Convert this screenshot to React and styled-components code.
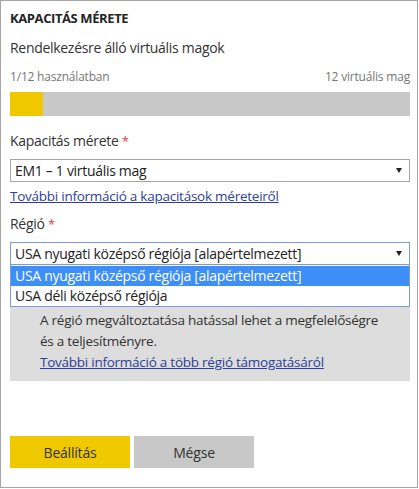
import React from "react";
import styled, { createGlobalStyle } from "styled-components";

const GlobalStyle = createGlobalStyle`
  html, body {
    margin: 0;
    padding: 0;
    background: #ffffff;
  }
  body {
    font-family: "Open Sans", "Noto Sans", sans-serif;
    color: #333333;
  }
`;

function Arrow() {
  return (
    <svg width="6" height="5" viewBox="0 0 6 5">
      <polygon points="0,0 6,0 3,5" fill="#222" />
    </svg>
  );
}

function Select({ value, focused, children }) {
  return (
    <SelectWrap>
      <SelectBox focused={focused}>
        <span>{value}</span>
        <Arrow />
      </SelectBox>
      {children}
    </SelectWrap>
  );
}

function App() {
  const used = 1;
  const total = 12;
  const options = [
    "USA nyugati középső régiója [alapértelmezett]",
    "USA déli középső régiója",
  ];
  return (
    <>
      <GlobalStyle />
      <Panel>
        <Heading>KAPACITÁS MÉRETE</Heading>
        <Subtitle>Rendelkezésre álló virtuális magok</Subtitle>
        <UsageRow>
          <span>
            {used}/{total} használatban
          </span>
          <span>{total} virtuális mag</span>
        </UsageRow>
        <Bar>
          <BarFill style={{ width: `${(used / total) * 100}%` }} />
        </Bar>

        <Label>
          Kapacitás mérete <Required>*</Required>
        </Label>
        <Select value="EM1 – 1 virtuális mag" />
        <Link href="#">További információ a kapacitások méreteiről</Link>

        <Label $tight>
          Régió <Required>*</Required>
        </Label>
        <Select value={options[0]} focused>
          <Dropdown>
            {options.map((o, i) => (
              <Option key={o} selected={i === 0}>
                {o}
              </Option>
            ))}
          </Dropdown>
        </Select>

        <InfoBox>
          <InfoText>A kapacitás a kiválasztott régióban jön létre.</InfoText>
          <InfoText>
            A régió megváltoztatása hatással lehet a megfelelőségre
          </InfoText>
          <InfoText>és a teljesítményre.</InfoText>
          <InfoText>
            <Link href="#" $inline>
              További információ a több régió támogatásáról
            </Link>
          </InfoText>
        </InfoBox>

        <Buttons>
          <Button primary>Beállítás</Button>
          <Button>Mégse</Button>
        </Buttons>
      </Panel>
    </>
  );
}

export default App;

const Panel = styled.div`
  box-sizing: border-box;
  width: 418px;
  height: 488px;
  border: 1px solid #a6a6a6;
  padding: 8px 7px 0 9px;
  display: flex;
  flex-direction: column;
`;

const Heading = styled.div`
  font-size: 13px;
  font-weight: 700;
  line-height: 18px;
  color: #252423;
  letter-spacing: -0.4px;
`;

const Subtitle = styled.div`
  margin-top: 11px;
  font-size: 14px;
  line-height: 20px;
  color: #333;
  letter-spacing: -0.3px;
`;

const UsageRow = styled.div`
  margin-top: 11px;
  display: flex;
  justify-content: space-between;
  font-size: 12px;
  line-height: 16px;
  color: #777;
  letter-spacing: -0.2px;
`;

const Bar = styled.div`
  margin-top: 7px;
  height: 24px;
  background: #c8c8c8;
`;

const BarFill = styled.div`
  height: 100%;
  background: #f0c800;
`;

const Label = styled.div`
  margin-top: ${(p) => (p.$tight ? "8px" : "15px")};
  font-size: 14px;
  line-height: 20px;
  color: #333;
  letter-spacing: -0.3px;
`;

const Required = styled.span`
  color: #e8413a;
  font-size: 13px;
`;

const SelectWrap = styled.div`
  position: relative;
  margin-top: 8px;
`;

const SelectBox = styled.div`
  box-sizing: border-box;
  height: 23px;
  border: 1px solid ${(p) => (p.focused ? "#7b9ad8" : "#a6a6a6")};
  padding: 0 7px 0 4px;
  display: flex;
  align-items: center;
  justify-content: space-between;
  font-size: 14px;
  color: #222;
  letter-spacing: -0.3px;
  background: #fff;
`;

const Dropdown = styled.div`
  position: absolute;
  top: 100%;
  left: 0;
  right: 0;
  box-sizing: border-box;
  border: 1px solid #7b9ad8;
  border-top: none;
  padding-top: 1px;
  background: #fff;
  z-index: 2;
`;

const Option = styled.div`
  height: 20px;
  line-height: 20px;
  padding-left: 4px;
  font-size: 14px;
  letter-spacing: -0.3px;
  color: ${(p) => (p.selected ? "#fff" : "#222")};
  background: ${(p) => (p.selected ? "#3d8ef7" : "#fff")};
`;

const Link = styled.a`
  display: ${(p) => (p.$inline ? "inline" : "block")};
  margin-top: ${(p) => (p.$inline ? "0" : "4px")};
  font-size: 13.5px;
  line-height: 20px;
  color: #2e3f9b;
  text-decoration: underline;
  letter-spacing: -0.25px;
`;

const InfoBox = styled.div`
  margin-top: 16px;
  background: #dddddd;
  padding: 8px 10px 8px 30px;
`;

const InfoText = styled.div`
  font-size: 13.5px;
  line-height: 21px;
  color: #333;
  letter-spacing: -0.25px;
  white-space: nowrap;
`;

const Buttons = styled.div`
  margin-top: 55px;
  display: flex;
  gap: 4px;
`;

const Button = styled.button`
  width: 120px;
  height: 32px;
  border: none;
  font-family: inherit;
  font-size: 14px;
  color: #333;
  letter-spacing: -0.2px;
  background: ${(p) => (p.primary ? "#f0c800" : "#c8c8c8")};
  cursor: pointer;
`;
